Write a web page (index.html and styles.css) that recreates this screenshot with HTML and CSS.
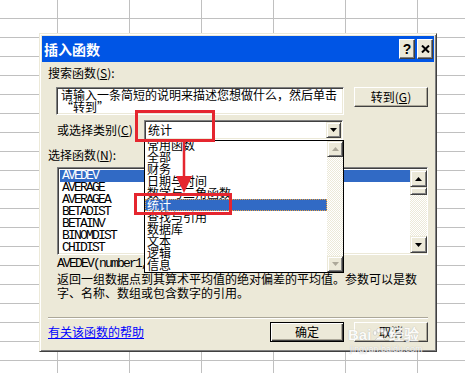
FILE: index.html
```html
<!DOCTYPE html>
<html lang="zh-CN">
<head>
<meta charset="UTF-8">
<title>插入函数</title>
<link rel="stylesheet" href="styles.css">
</head>
<body>
<div class="dialog">
	<div class="titlebar">
		<span class="title">插入函数</span>
		<span class="tbtn help">?</span>
		<span class="tbtn close">
			<svg width="9" height="8" viewBox="0 0 9 8"><path d="M1 0.5 L8 7.5 M8 0.5 L1 7.5" stroke="#000" stroke-width="2"/></svg>
		</span>
	</div>

	<div class="content">
		<div class="label">搜索函数(<u>S</u>):</div>

		<div class="search-row">
			<div class="search-box">请输入一条简短的说明来描述您想做什么，然后单击“转到”</div>
			<div class="btn">转到(<u>G</u>)</div>
		</div>

		<div class="cat-row">
			<span class="cat-label">或选择类别(<u>C</u>)</span>
			<div class="combo">
				<span class="combo-text">统计</span>
				<span class="sbtn combo-btn"><svg width="7" height="4" viewBox="0 0 7 4"><path d="M0 0 H7 L3.5 4 Z" fill="#000"/></svg></span>
			</div>
		</div>

		<div class="label label-fn">选择函数(<u>N</u>):</div>

		<div class="listbox">
			<ul class="fn-list">
				<li class="selected">AVEDEV</li>
				<li>AVERAGE</li>
				<li>AVERAGEA</li>
				<li>BETADIST</li>
				<li>BETAINV</li>
				<li>BINOMDIST</li>
				<li>CHIDIST</li>
			</ul>
			<div class="vscroll">
				<span class="sbtn"><svg width="7" height="4" viewBox="0 0 7 4"><path d="M0 4 H7 L3.5 0 Z" fill="#000"/></svg></span>
				<span class="sbtn thumb"></span>
				<span class="track"></span>
				<span class="sbtn"><svg width="7" height="4" viewBox="0 0 7 4"><path d="M0 0 H7 L3.5 4 Z" fill="#000"/></svg></span>
			</div>
		</div>

		<div class="syntax">AVEDEV(number1,number2,...)</div>
		<div class="desc">返回一组数据点到其算术平均值的绝对偏差的平均值。参数可以是数字、名称、数组或包含数字的引用。</div>

		<div class="sep"></div>

		<div class="bottom-row">
			<a class="help-link" href="#">有关该函数的帮助</a>
			<div class="btn default first">确定</div>
			<div class="btn">取消</div>
		</div>
	</div>

	<!-- 展开的类别下拉列表 -->
	<div class="dropdown">
		<ul class="cat-list">
			<li>常用函数</li>
			<li>全部</li>
			<li>财务</li>
			<li>日期与时间</li>
			<li>数学与三角函数</li>
			<li class="selected">统计</li>
			<li>查找与引用</li>
			<li>数据库</li>
			<li>文本</li>
			<li>逻辑</li>
			<li>信息</li>
		</ul>
		<div class="vscroll dd-scroll">
			<span class="sbtn"><svg width="7" height="4" viewBox="0 0 7 4"><path d="M0 4 H7 L3.5 0 Z" fill="#aca899"/></svg></span>
			<span class="track"></span>
			<span class="sbtn"><svg width="7" height="4" viewBox="0 0 7 4"><path d="M0 0 H7 L3.5 4 Z" fill="#aca899"/></svg></span>
		</div>
	</div>
</div>

<!-- 红色标注 -->
<div class="mark mark-combo"></div>
<div class="mark mark-item"></div>
<svg class="arrow" width="20" height="54" viewBox="0 0 20 54">
	<path d="M9 0 V37" stroke="#e5262f" stroke-width="2.5"/>
	<path d="M1 35 H17 L9 52 Z" fill="#e5262f"/>
</svg>

<div class="watermark">
	<div class="wm-top">Bai<svg width="16" height="14" viewBox="0 0 16 14"><g fill="#fff" stroke="#c8c8c8" stroke-width="0.8"><ellipse cx="3" cy="5" rx="1.8" ry="2.4"/><ellipse cx="6.5" cy="2.5" rx="1.8" ry="2.4"/><ellipse cx="10" cy="2.5" rx="1.8" ry="2.4"/><ellipse cx="13.2" cy="5" rx="1.8" ry="2.4"/><path d="M3 12 Q8 5 13 12 Z"/></g></svg>经验</div>
	<div class="wm-bottom">jingyan.baidu.com</div>
</div>
</body>
</html>
```

FILE: styles.css
```css
body, div, ul, li {
	margin: 0;
	padding: 0;
}

body {
	position: relative;
	width: 465px;
	height: 373px;
	overflow: hidden;
	background-color: #fff;
	/* Excel 表格线 */
	background-image: linear-gradient(to right, #c0c0c0 1px, transparent 1px),
		linear-gradient(to bottom, #c0c0c0 1px, transparent 1px);
	background-size: 72px 19px;
	background-position: 57px 18px;
	font-family: "Noto Sans CJK SC", "Liberation Sans", sans-serif;
	font-size: 12px;
	color: #000;
}

ul {
	list-style: none;
}

/* 对话框窗口 */
.dialog {
	position: absolute;
	left: 39px;
	top: 33px;
	width: 398px;
	height: 319px;
	box-sizing: border-box;
	border: 1px solid;
	border-color: #ece9d8 #404040 #404040 #ece9d8;
	box-shadow: inset 1px 1px #fff, inset -1px -1px #808080;
	padding: 2px;
	background: #ece9d8;
	display: flex;
	flex-direction: column;
}

.titlebar {
	height: 26px;
	flex: 0 0 26px;
	background: #0055e5;
	display: flex;
	align-items: center;
	padding: 0 1px 0 2px;
}

.title {
	flex: 1;
	color: #fff;
	font-weight: bold;
	font-size: 14px;
	line-height: 16px;
}

.tbtn {
	width: 16px;
	height: 20px;
	margin-left: 2px;
	box-sizing: border-box;
	border: 1px solid;
	border-color: #fff #404040 #404040 #fff;
	box-shadow: inset -1px -1px #808080;
	background: #ece9d8;
	display: flex;
	align-items: center;
	justify-content: center;
	font: bold 14px "Liberation Sans", sans-serif;
}

.content {
	flex: 1;
	padding: 0 6px;
	display: flex;
	flex-direction: column;
}

.label {
	margin-top: 4px;
	line-height: 14px;
}

.label-fn {
	margin-top: 8px;
}

.search-row {
	margin-top: 7px;
	display: flex;
	align-items: flex-start;
}

/* 凹陷边框 */
.search-box, .combo, .listbox {
	box-sizing: border-box;
	border: 1px solid;
	border-color: #808080 #fff #fff #808080;
	box-shadow: inset 1px 1px #404040, inset -1px -1px #ece9d8;
	background: #fff;
}

.search-box {
	margin-left: 8px;
	width: 288px;
	height: 28px;
	padding: 1px 3px 0 4px;
	line-height: 12px;
}

.btn {
	width: 74px;
	height: 20px;
	margin-left: 10px;
	box-sizing: border-box;
	border: 1px solid;
	border-color: #fff #404040 #404040 #fff;
	box-shadow: inset -1px -1px #aca899;
	background: #ece9d8;
	display: flex;
	align-items: center;
	justify-content: center;
	line-height: 14px;
}

.btn.default {
	border-color: #000;
	box-shadow: inset 1px 1px #fff, inset -1px -1px #404040, inset -2px -2px #aca899;
}

.cat-row {
	margin-top: 5px;
	height: 20px;
	display: flex;
	align-items: center;
}

.cat-label {
	margin-left: 9px;
	width: 87px;
	line-height: 14px;
}

.combo {
	width: 199px;
	height: 20px;
	padding: 1px;
	display: flex;
	align-items: center;
}

.combo-text {
	flex: 1;
	padding-left: 2px;
	line-height: 14px;
}

/* 滚动条按钮 */
.sbtn {
	width: 16px;
	height: 16px;
	box-sizing: border-box;
	border: 1px solid;
	border-color: #ece9d8 #404040 #404040 #ece9d8;
	box-shadow: inset 1px 1px #fff, inset -1px -1px #808080;
	background: #ece9d8;
	display: flex;
	align-items: center;
	justify-content: center;
	flex: 0 0 auto;
}

.combo-btn {
	width: 15px;
}

.listbox {
	margin-top: 5px;
	margin-left: 9px;
	width: 371px;
	height: 88px;
	padding: 2px 0 1px 2px;
	display: flex;
}

.fn-list {
	flex: 1;
	font-family: "Liberation Mono", monospace;
	font-size: 13px;
	letter-spacing: -1.8px;
}

.fn-list li {
	height: 12px;
	line-height: 12px;
	padding-left: 2px;
}

li.selected {
	background: #316ac5;
	color: #fff;
}

.vscroll {
	width: 17px;
	display: flex;
	flex-direction: column;
}

.vscroll .sbtn {
	width: 17px;
	height: 17px;
}

.vscroll .thumb {
	height: 8px;
}

.track {
	flex: 1;
	background: repeating-conic-gradient(#fff 0 25%, #ece9d8 0 50%) 0 0 / 2px 2px;
}

.syntax {
	margin-top: 3px;
	margin-left: 9px;
	font-family: "Liberation Mono", monospace;
	font-size: 13px;
	letter-spacing: -1.8px;
	line-height: 12px;
	white-space: nowrap;
}

.desc {
	margin-top: 2px;
	margin-left: 9px;
	line-height: 14px;
}

.sep {
	margin-top: 17px;
	border-top: 1px solid #aca899;
	border-bottom: 1px solid #fff;
}

.bottom-row {
	margin-top: 3px;
	height: 20px;
	display: flex;
	align-items: center;
}

.help-link {
	color: #0000ff;
	text-decoration: underline;
	line-height: 14px;
}

.bottom-row .first {
	margin-left: auto;
}

/* 下拉列表（覆盖在对话框上） */
.dropdown {
	position: absolute;
	left: 104px;
	top: 106px;
	width: 200px;
	height: 133px;
	box-sizing: border-box;
	border: 1px solid #000;
	background: #fff;
	display: flex;
	overflow: hidden;
}

.cat-list {
	flex: 1;
	margin-top: -2px;
}

.cat-list li {
	height: 12px;
	line-height: 12px;
	padding-left: 2px;
}

.cat-list li.selected {
	outline: 1px dotted #e8a040;
	outline-offset: -1px;
}

.dd-scroll {
	width: 16px;
}

.dd-scroll .sbtn {
	width: 16px;
	height: 16px;
}

/* 红色标注框 */
.mark {
	position: absolute;
	box-sizing: border-box;
	border: 3px solid #e5262f;
}

.mark-combo {
	left: 135px;
	top: 110px;
	width: 80px;
	height: 32px;
}

.mark-item {
	left: 134px;
	top: 193px;
	width: 98px;
	height: 22px;
}

.arrow {
	position: absolute;
	left: 175px;
	top: 141px;
}

/* 水印 */
.watermark {
	position: absolute;
	left: 348px;
	top: 326px;
	color: #fff;
	opacity: 0.85;
	text-shadow: 0 0 1px #a0a0a0;
}

.wm-top {
	display: flex;
	align-items: center;
	font: bold 15px "Liberation Sans", sans-serif;
	line-height: 18px;
}

.wm-top svg {
	margin: 0 1px;
}

.wm-bottom {
	font: 9px "Liberation Sans", sans-serif;
	line-height: 10px;
	padding-left: 2px;
}
```
